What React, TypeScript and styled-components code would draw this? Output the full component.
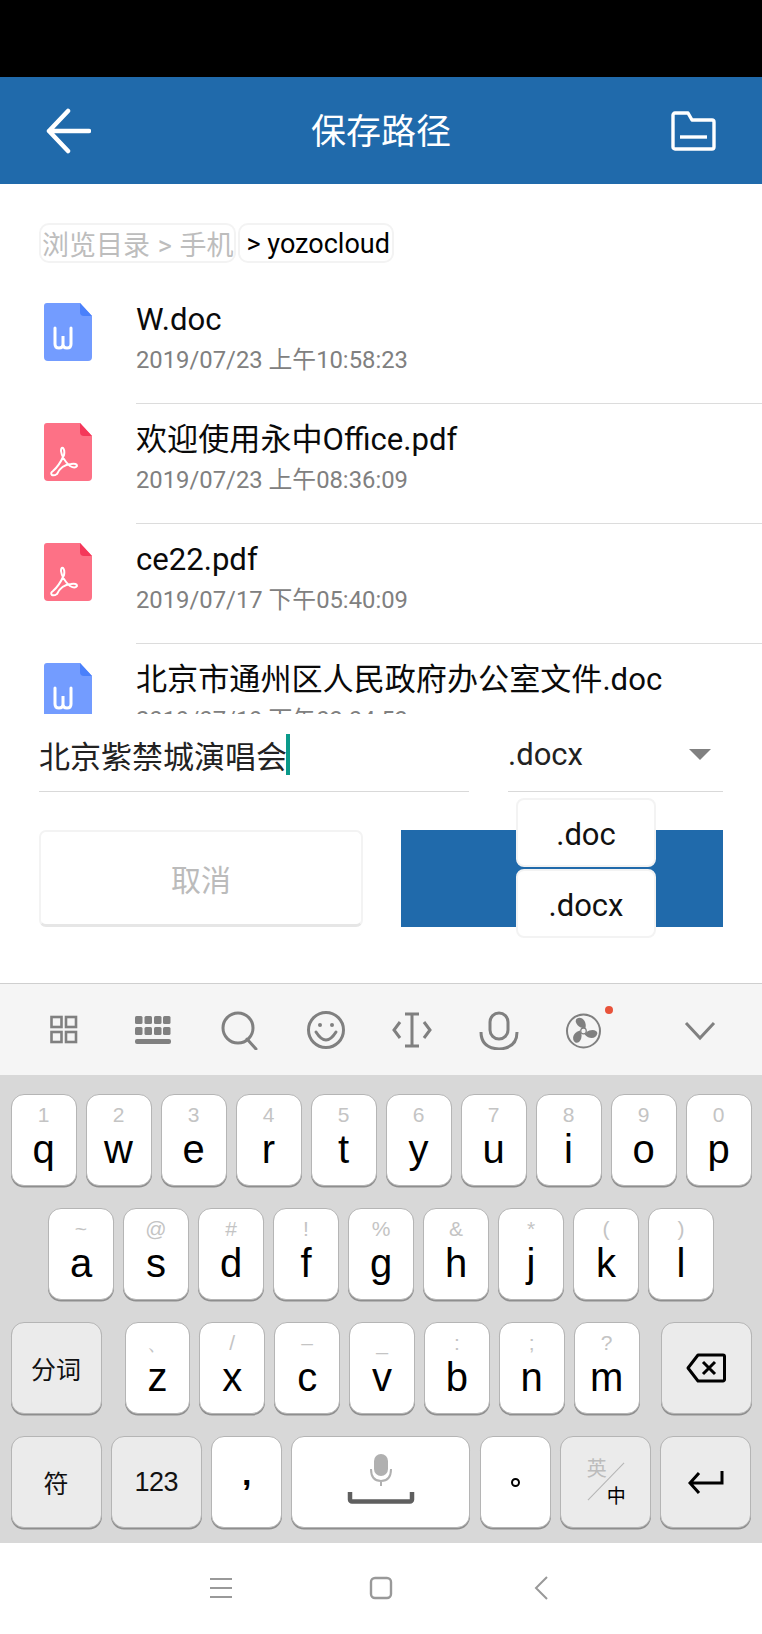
import styled, { createGlobalStyle } from "styled-components";

const GlobalStyle = createGlobalStyle`
    html, body {
        margin: 0;
        padding: 0;
        background: #fff;
    }
    * {
        box-sizing: border-box;
    }
`

const files = [
    { name: "W.doc", date: "2019/07/23 上午10:58:23", kind: "doc" },
    { name: "欢迎使用永中Office.pdf", date: "2019/07/23 上午08:36:09", kind: "pdf" },
    { name: "ce22.pdf", date: "2019/07/17 下午05:40:09", kind: "pdf" },
    { name: "北京市通州区人民政府办公室文件.doc", date: "2019/07/19 下午03:04:53", kind: "doc" },
]

const row1 = [["1", "q"], ["2", "w"], ["3", "e"], ["4", "r"], ["5", "t"], ["6", "y"], ["7", "u"], ["8", "i"], ["9", "o"], ["0", "p"]]
const row2 = [["~", "a"], ["@", "s"], ["#", "d"], ["!", "f"], ["%", "g"], ["&", "h"], ["*", "j"], ["(", "k"], [")", "l"]]
const row3 = [["、", "z"], ["/", "x"], ["–", "c"], ["_", "v"], [":", "b"], [";", "n"], ["?", "m"]]

const FileIcon = ({ kind }: { kind: string }) => {
    const isDoc = kind === "doc"
    return (
        <svg width="48" height="58" viewBox="0 0 48 58">
            <path d="M3 0H36L48 13V54a4 4 0 0 1-4 4H4a4 4 0 0 1-4-4V3a3 3 0 0 1 3-3Z" fill={isDoc ? "#739cff" : "#fd7186"} />
            <path d="M36 0L48 13H40a4 4 0 0 1-4-4Z" fill={isDoc ? "#4a80fb" : "#f4385a"} />
            {isDoc ? (
                <path d="M11 25V41q0 4 4 4t4-3.5V33V41.500q0 3.500 4 3.500t4-4V25" fill="none" stroke="#fff" strokeWidth="3" strokeLinecap="round" />
            ) : (
                <path d="M18 47q-3 2-5 1q-2-2 1-4q6-5 11-16q1-5-1-7q-2-1-2 3q1 8 9 15q5 3 7 0q0-3-6-2q-10 1-14 10Z" fill="none" stroke="#fff" strokeWidth="2" strokeLinejoin="round" transform="translate(-5 4)" />
            )}
        </svg>
    )
}

export default function App() {
    return (
        <Page>
            <GlobalStyle />
            <StatusBar />
            <Header>
                <svg width="45" height="46" viewBox="0 0 45 46">
                    <path d="M22 3L3 23L22 43M3 23H43" fill="none" stroke="#fff" strokeWidth="4.5" strokeLinecap="round" strokeLinejoin="round" />
                </svg>
                <HeaderTitle>保存路径</HeaderTitle>
                <svg width="45" height="40" viewBox="0 0 45 40">
                    <path d="M2 4a2 2 0 0 1 2-2H17L21 9H41a2 2 0 0 1 2 2V36a2 2 0 0 1-2 2H4a2 2 0 0 1-2-2Z" fill="none" stroke="#fff" strokeWidth="3.4" strokeLinejoin="round" />
                    <path d="M9 26H36" stroke="#fff" strokeWidth="3.4" />
                </svg>
            </Header>

            <Browser>
                <Breadcrumbs>
                    <Crumb $muted>浏览目录 &gt; 手机</Crumb>
                    <Crumb $inset={7}>&gt; yozocloud</Crumb>
                </Breadcrumbs>
                {files.map((file) => (
                    <FileRow key={file.name}>
                        <FileIconBox>
                            <FileIcon kind={file.kind} />
                        </FileIconBox>
                        <FileText>
                            <FileName>{file.name}</FileName>
                            <FileDate>{file.date}</FileDate>
                        </FileText>
                    </FileRow>
                ))}
            </Browser>

            <Form>
                <Fields>
                    <NameField>
                        北京紫禁城演唱会
                        <Caret />
                    </NameField>
                    <TypeField>
                        .docx
                        <Arrow />
                        <TypeMenu>
                            <TypeOption>.doc</TypeOption>
                            <TypeOption>.docx</TypeOption>
                        </TypeMenu>
                    </TypeField>
                </Fields>
                <Actions>
                    <CancelButton>取消</CancelButton>
                    <ConfirmButton />
                </Actions>
            </Form>

            <Toolbar>
                <ToolCell>
                    <svg width="40" height="40" viewBox="0 0 40 40" fill="none" stroke="#808080" strokeWidth="2.6">
                        <rect x="7.500" y="7" width="10" height="10" />
                        <rect x="22" y="7" width="10" height="10" />
                        <rect x="7.500" y="22" width="10" height="10" />
                        <rect x="22" y="22" width="10" height="10" />
                    </svg>
                </ToolCell>
                <ToolCell $gap={3}>
                    <svg width="40" height="40" viewBox="0 0 40 40" fill="#808080">
                        {[2, 11.5, 21, 30].map((x) => (
                            <g key={x}>
                                <rect x={x} y="6" width="7.5" height="8" rx="1.5" />
                                <rect x={x} y="17" width="7.5" height="8" rx="1.5" />
                            </g>
                        ))}
                        <rect x="2" y="29" width="36" height="5" rx="2" />
                    </svg>
                </ToolCell>
                <ToolCell>
                    <svg width="40" height="40" viewBox="0 0 40 40" fill="none" stroke="#808080" strokeWidth="3">
                        <circle cx="18" cy="18" r="15" />
                        <path d="M27 29L36 39" strokeLinecap="round" />
                    </svg>
                </ToolCell>
                <ToolCell>
                    <svg width="40" height="40" viewBox="0 0 40 40" fill="none" stroke="#808080" strokeWidth="3">
                        <circle cx="20" cy="20" r="17.5" />
                        <path d="M10 22q10 16 20 0" strokeLinecap="round" />
                        <circle cx="14" cy="15" r="2" fill="#808080" stroke="none" />
                        <circle cx="26" cy="15" r="2" fill="#808080" stroke="none" />
                    </svg>
                </ToolCell>
                <ToolCell>
                    <svg width="40" height="40" viewBox="0 0 40 40" fill="none" stroke="#808080" strokeWidth="3">
                        <path d="M8 12L2 20L8 28M32 12L38 20L32 28" />
                        <path d="M13 4H27M13 36H27M20 4V36" />
                    </svg>
                </ToolCell>
                <ToolCell>
                    <svg width="40" height="40" viewBox="0 0 40 40" fill="none" stroke="#808080" strokeWidth="3">
                        <rect x="11" y="3" width="18" height="26" rx="9" />
                        <path d="M2 22q0 16 18 17q18-1 18-17" />
                    </svg>
                </ToolCell>
                <ToolCell>
                    <svg width="40" height="40" viewBox="0 0 40 40">
                        <g transform="translate(-1.5 1)">
                            <circle cx="20" cy="20" r="16.500" fill="none" stroke="#808080" strokeWidth="2" />
                            <path d="M19 17C14 16 10 10 13.500 7.500C18 5 23.500 10 22 17Z" fill="#808080" />
                            <path d="M19 17C14 16 10 10 13.500 7.500C18 5 23.500 10 22 17Z" fill="#808080" transform="rotate(128 20 20)" />
                            <path d="M19 17C14 16 10 10 13.500 7.500C18 5 23.500 10 22 17Z" fill="#808080" transform="rotate(243 20 20)" />
                            <circle cx="20" cy="20" r="2.800" fill="#f5f5f5" stroke="#808080" strokeWidth="1.2" />
                        </g>
                    </svg>
                    <NoticeDot />
                </ToolCell>
                <ToolCell $gap={29}>
                    <svg width="40" height="40" viewBox="0 0 40 40" fill="none" stroke="#808080" strokeWidth="3">
                        <path d="M6 13L20 28L34 13" />
                    </svg>
                </ToolCell>
            </Toolbar>

            <Keys>
                <KeyRow>
                    {row1.map(([hint, letter]) => (
                        <Key key={letter}>
                            <Hint>{hint}</Hint>
                            <Letter>{letter}</Letter>
                        </Key>
                    ))}
                </KeyRow>
                <KeyRow $inset={48}>
                    {row2.map(([hint, letter]) => (
                        <Key key={letter}>
                            <Hint>{hint}</Hint>
                            <Letter>{letter}</Letter>
                        </Key>
                    ))}
                </KeyRow>
                <KeyRow>
                    <Key $width={91} $dark>
                        <CjkLabel>分词</CjkLabel>
                    </Key>
                    <LetterGroup>
                        {row3.map(([hint, letter]) => (
                            <Key key={letter}>
                                <Hint>{hint}</Hint>
                                <Letter>{letter}</Letter>
                            </Key>
                        ))}
                    </LetterGroup>
                    <Key $width={91} $dark>
                        <svg width="40" height="30" viewBox="0 0 40 30" fill="none" stroke="#000" strokeWidth="3">
                            <path d="M12 2H37a1.5 1.5 0 0 1 1.5 1.5V26.5A1.5 1.5 0 0 1 37 28H12L2 15Z" strokeLinejoin="round" />
                            <path d="M17 9L29 21M29 9L17 21" />
                        </svg>
                    </Key>
                </KeyRow>
                <KeyRow>
                    <Key $width={91} $dark>
                        <CjkLabel>符</CjkLabel>
                    </Key>
                    <Key $width={91} $dark>
                        <NumLabel>123</NumLabel>
                    </Key>
                    <Key $width={71}>
                        <PunctLabel>,</PunctLabel>
                    </Key>
                    <Key $width={179}>
                        <SpaceMark width="68" height="50" viewBox="0 0 68 50">
                            <rect x="27" y="0" width="14" height="22" rx="7" fill="#b0b0b0" />
                            <path d="M24 15q0 12 10 12t10-12M34 27V32" fill="none" stroke="#b0b0b0" strokeWidth="2" />
                            <path d="M3 38V45.500a2 2 0 0 0 2 2H63a2 2 0 0 0 2-2V38" fill="none" stroke="#5f5f5f" strokeWidth="4.5" />
                        </SpaceMark>
                    </Key>
                    <Key $width={71}>
                        <CircleMark />
                    </Key>
                    <Key $width={91} $dark>
                        <LangSwitch>
                            <LangTop>英</LangTop>
                            <LangSlash />
                            <LangBottom>中</LangBottom>
                        </LangSwitch>
                    </Key>
                    <Key $width={91} $dark>
                        <svg width="36" height="24" viewBox="0 0 36 24" fill="none" stroke="#000" strokeWidth="3">
                            <path d="M34 1V13H3M11 3L2 13L11 23" />
                        </svg>
                    </Key>
                </KeyRow>
            </Keys>

            <NavBar>
                <svg width="24" height="22" viewBox="0 0 24 22" fill="none" stroke="#999" strokeWidth="2">
                    <path d="M1 2H23M1 11H23M1 20H23" />
                </svg>
                <svg width="24" height="24" viewBox="0 0 24 24" fill="none" stroke="#999" strokeWidth="2.4">
                    <rect x="2" y="2" width="20" height="20" rx="4" />
                </svg>
                <svg width="24" height="24" viewBox="0 0 24 24" fill="none" stroke="#999" strokeWidth="2">
                    <path d="M18 1L7 12L18 23" />
                </svg>
            </NavBar>
        </Page>
    )
}

const Page = styled.div`
    display: flex;
    flex-direction: column;
    width: 762px;
    height: 1634px;
    overflow: hidden;
    background: #fff;
    font-family: Roboto, "Noto Sans CJK SC", sans-serif;
`

const StatusBar = styled.div`
    height: 77px;
    flex-shrink: 0;
    background: #000;
`

const Header = styled.header`
    display: flex;
    align-items: center;
    justify-content: space-between;
    height: 107px;
    flex-shrink: 0;
    padding: 0 46px;
    background: #206aab;
`

const HeaderTitle = styled.h1`
    margin: 5px 0 0;
    color: #fff;
    font-size: 35px;
    font-weight: 400;
    line-height: 46px;
`

const Browser = styled.section`
    height: 530px;
    flex-shrink: 0;
    overflow: hidden;
`

const Breadcrumbs = styled.div`
    display: flex;
    gap: 2px;
    margin: 39px 0 21px 39px;
`

const Crumb = styled.span<{ $muted?: boolean; $inset?: number }>`
    display: flex;
    align-items: center;
    height: 40px;
    padding: 1px ${(p) => (p.$muted ? 0 : 2)}px 0 ${(p) => p.$inset ?? 1}px;
    border: 2px solid #f3f3f3;
    border-radius: 10px;
    color: ${(p) => (p.$muted ? "#bdbdbd" : "#000")};
    font-size: 27px;
    word-spacing: ${(p) => (p.$muted ? 1 : 0)}px;
    white-space: nowrap;
`

const FileRow = styled.div`
    display: flex;
    height: 120px;
`

const FileIconBox = styled.div`
    width: 136px;
    flex-shrink: 0;
    padding: 19px 0 0 44px;
`

const FileText = styled.div`
    flex: 1;
    padding-top: 15px;
    border-bottom: 1px solid #dcdcdc;
`

const FileName = styled.div`
    color: #0a0a0a;
    font-size: 31.1px;
    line-height: 42px;
`

const FileDate = styled.div`
    margin-top: 4px;
    color: #808080;
    font-size: 23.8px;
    line-height: 30px;
`

const Form = styled.section`
    height: 269px;
    flex-shrink: 0;
    padding: 0 39px;
`

const Fields = styled.div`
    display: flex;
    gap: 39px;
    height: 78px;
`

const NameField = styled.div`
    display: flex;
    align-items: center;
    width: 430px;
    padding-top: 4px;
    border-bottom: 1px solid #d9d9d9;
    color: #222;
    font-size: 31px;
`

const Caret = styled.span`
    display: inline-block;
    width: 4px;
    height: 41px;
    margin-left: -1px;
    background: #0a9a8a;
`

const TypeField = styled.div`
    position: relative;
    display: flex;
    align-items: center;
    justify-content: space-between;
    width: 215px;
    padding: 4px 12px 0 0;
    border-bottom: 1px solid #d9d9d9;
    color: #222;
    font-size: 31px;
`

const Arrow = styled.span`
    width: 0;
    height: 0;
    border-left: 11px solid transparent;
    border-right: 11px solid transparent;
    border-top: 11px solid #808080;
`

const TypeMenu = styled.div`
    position: absolute;
    top: calc(100% + 7px);
    left: 8px;
    z-index: 2;
    display: flex;
    flex-direction: column;
    gap: 2px;
    width: 140px;
`

const TypeOption = styled.div`
    display: flex;
    align-items: center;
    justify-content: center;
    height: 69px;
    padding-top: 3px;
    border: 2px solid #f3f3f3;
    border-radius: 8px;
    background: #fff;
    color: #111;
    font-size: 31px;
`

const Actions = styled.div`
    display: flex;
    justify-content: space-between;
    margin-top: 38px;
`

const CancelButton = styled.button`
    width: 324px;
    height: 97px;
    padding: 0;
    border: 2px solid #f3f3f3;
    border-bottom-color: #e6e6e6;
    border-bottom-width: 3px;
    border-radius: 7px;
    background: #fff;
    color: #bbb;
    font-family: inherit;
    font-size: 30px;
`

const ConfirmButton = styled.button`
    width: 322px;
    height: 97px;
    padding: 0;
    border: none;
    background: #206aab;
`

const Toolbar = styled.div`
    display: flex;
    align-items: center;
    height: 92px;
    flex-shrink: 0;
    padding: 0 0 0 21px;
    border-top: 1.5px solid #cfcfcf;
    background: #f5f5f5;
`

const ToolCell = styled.div<{ $gap?: number }>`
    position: relative;
    display: flex;
    align-items: center;
    justify-content: center;
    width: 86.3px;
    margin-left: ${(p) => p.$gap ?? 0}px;
`

const NoticeDot = styled.span`
    position: absolute;
    top: -4px;
    right: 15px;
    width: 8px;
    height: 8px;
    border-radius: 50%;
    background: #e8523a;
`

const Keys = styled.div`
    display: flex;
    flex-direction: column;
    gap: 21px;
    height: 468px;
    flex-shrink: 0;
    padding-top: 19px;
    background: #d8d8d8;
`

const KeyRow = styled.div<{ $inset?: number }>`
    display: flex;
    justify-content: space-between;
    gap: 9px;
    height: 93px;
    padding: 0 ${(p) => p.$inset ?? 10.5}px;
`

const LetterGroup = styled.div`
    display: flex;
    flex: 1;
    gap: 9px;
    margin: 0 12px 0 14px;
`

const Key = styled.div<{ $width?: number; $dark?: boolean }>`
    display: flex;
    flex-direction: column;
    align-items: center;
    justify-content: center;
    flex: ${(p) => (p.$width ? `0 0 ${p.$width}px` : "1")};
    height: 92px;
    border: 1px solid #b5b5b5;
    border-radius: 13px;
    background: ${(p) => (p.$dark ? "#ebebeb" : "#fff")};
    box-shadow: 0 1.5px 0 #8e8e8e;
    font-family: "Liberation Sans", sans-serif;
`

const Hint = styled.span`
    height: 26px;
    margin: -5.5px 0 -3.5px;
    color: #c4c4c4;
    font-size: 21px;
    line-height: 26px;
`

const Letter = styled.span`
    height: 48px;
    color: #000;
    font-size: 40px;
    line-height: 48px;
`

const CjkLabel = styled.span`
    color: #111;
    font-family: "Noto Sans CJK SC", sans-serif;
    font-size: 25px;
`

const NumLabel = styled.span`
    color: #111;
    font-size: 27px;
    letter-spacing: -0.5px;
`

const PunctLabel = styled.span`
    margin-top: -18px;
    color: #000;
    font-size: 34px;
    font-weight: 700;
    line-height: 40px;
`

const CircleMark = styled.span`
    width: 9px;
    height: 9px;
    border: 2px solid #000;
    border-radius: 50%;
`

const SpaceMark = styled.svg`
    margin-top: -6px;
`

const LangSwitch = styled.div`
    position: relative;
    width: 40px;
    height: 50px;
    font-family: "Noto Sans CJK SC", sans-serif;
    line-height: 1;
`

const LangTop = styled.span`
    position: absolute;
    top: 1px;
    left: 1px;
    color: #bcbcbc;
    font-size: 20px;
`

const LangBottom = styled.span`
    position: absolute;
    top: 28px;
    left: 21px;
    color: #000;
    font-size: 19px;
`

const LangSlash = styled.span`
    position: absolute;
    top: 24px;
    left: -6px;
    width: 52px;
    height: 1px;
    background: #b5b5b5;
    transform: rotate(-46deg);
`

const NavBar = styled.nav`
    display: flex;
    align-items: center;
    justify-content: center;
    gap: 136px;
    flex: 1;
    padding-bottom: 1px;
    background: #fff;
`
